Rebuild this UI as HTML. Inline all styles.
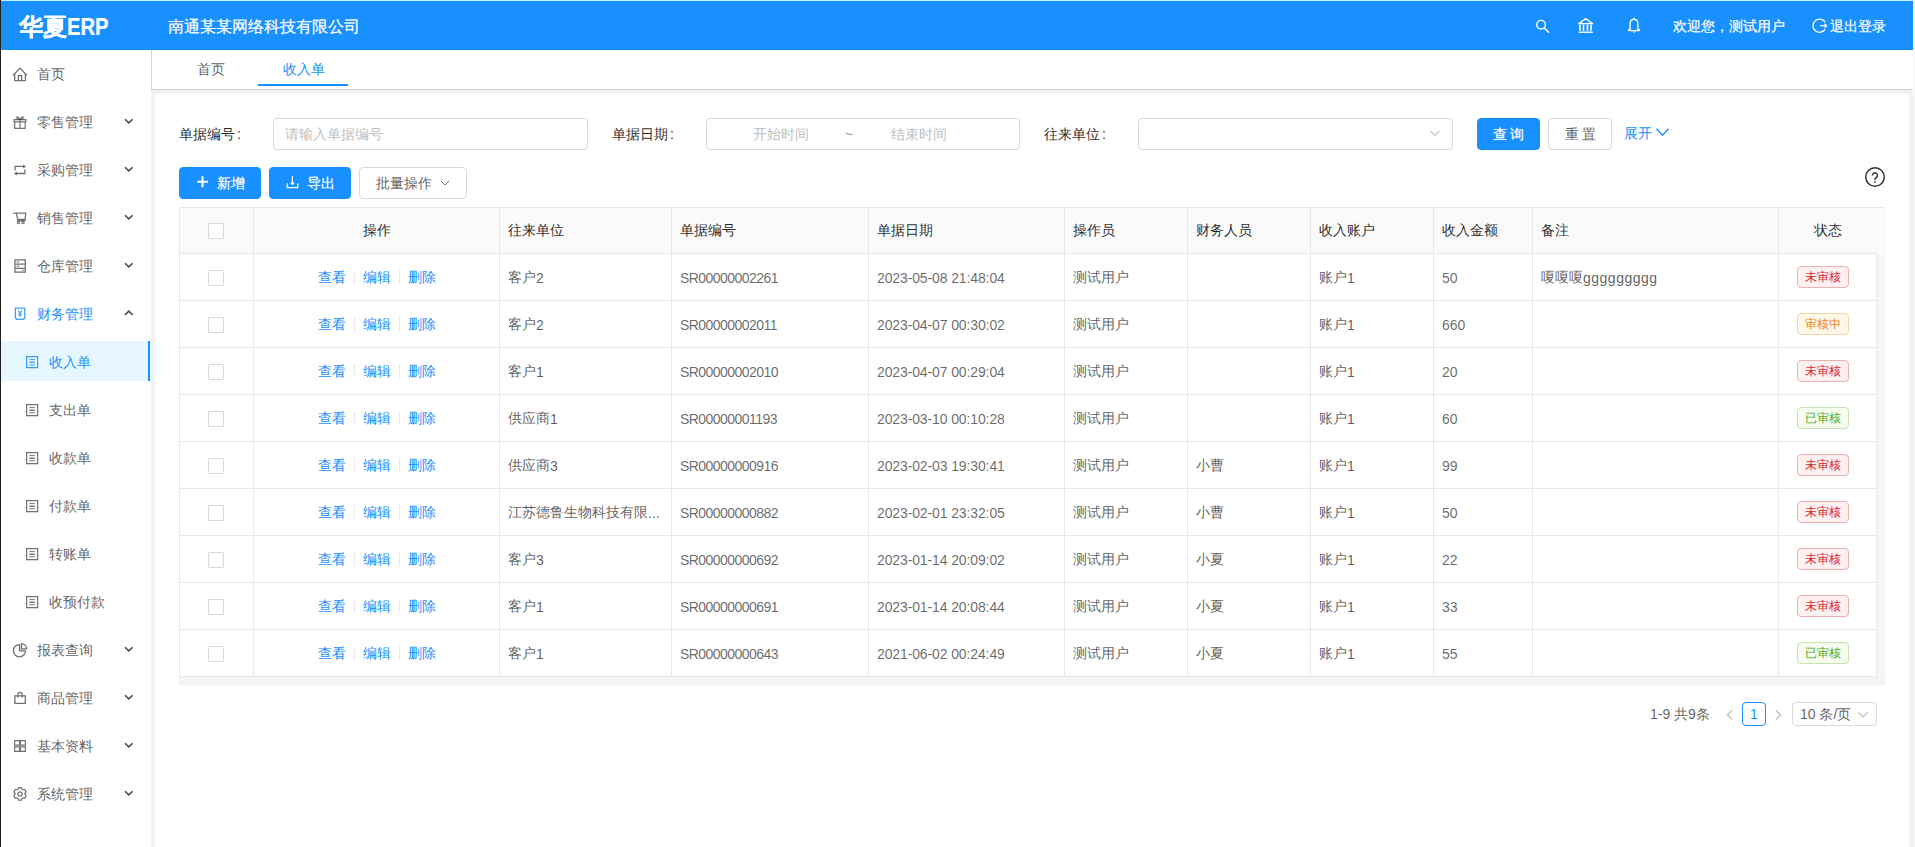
<!DOCTYPE html>
<html><head><meta charset="utf-8">
<style>
*{box-sizing:border-box}
html,body{margin:0;padding:0}
body{width:1915px;height:847px;overflow:hidden;position:relative;background:#fff;font-family:"Liberation Sans",sans-serif;font-size:14px;color:rgba(0,0,0,.65)}
.abs{position:absolute}
#edgeL{left:0;top:0;width:1px;height:847px;background:#1e1e1e}
#edgeT{left:0;top:0;width:1915px;height:1px;background:#bdf3ff}
#edgeR{left:1913px;top:0;width:2px;height:847px;background:linear-gradient(#eefcff 0,#eefcff 50px,#f7f7f7 50px)}
#header{left:1px;top:1px;width:1912px;height:49px;background:#1890ff;color:#fff;-webkit-text-stroke:0.2px #fff}
#logo{left:18px;top:11px;font-size:22px;font-weight:bold;line-height:30px;white-space:nowrap}
#company{left:167px;top:15px;font-size:16px;line-height:22px}
#sider{left:1px;top:50px;width:150px;height:797px;background:#fff}
#tabbar{left:151px;top:50px;width:1761px;height:40px;background:#fff;border-left:1px solid #d4d4d4;border-bottom:1px solid #cdcdcd}
#contentbg{left:151px;top:90px;width:1764px;height:757px;background:#f2f2f2}
#card{left:155px;top:94px;width:1754px;height:753px;background:#fff}
.menu-item{position:absolute;left:0;width:150px;height:40px;line-height:40px;color:rgba(0,0,0,.65);font-size:14px}
.menu-item .ic{position:absolute;top:13px;left:11px;width:16px;height:16px;opacity:.85}
.menu-item .tx{position:absolute;left:36px;top:1px}
.menu-item .arr{position:absolute;left:122px;top:16px;width:12px;height:9px}
.menu-item.sub .ic{left:23px}
.menu-item.sub .tx{left:48px}
.menu-item.sel{background:#e6f7ff;color:#1890ff}
.menu-item.sel .ic{color:#1890ff}
.menu-item.sel:after{content:"";position:absolute;right:1px;top:0;width:2px;height:40px;background:#1890ff}

.tab{position:absolute;top:-1px;height:40px;line-height:40px;font-size:14px;color:rgba(0,0,0,.65)}
#inkbar{left:106px;top:34px;width:90px;height:2px;background:#1890ff}
.lbl{position:absolute;font-size:14px;color:rgba(0,0,0,.85);line-height:22px}
.inp{position:absolute;height:32px;border:1px solid #d9d9d9;border-radius:4px;background:#fff;line-height:30px;font-size:14px;color:#bfbfbf}
.btn{position:absolute;height:32px;border-radius:4px;font-size:14px;line-height:30px;text-align:center;border:1px solid #d9d9d9;background:#fff;color:rgba(0,0,0,.65)}
.btn.primary{background:#1890ff;border-color:#1890ff;color:#fff;-webkit-text-stroke:0.2px #fff}

.hl{position:absolute;height:1px;background:#e8e8e8}
.vl{position:absolute;width:1px;background:#e8e8e8}
.th{position:absolute;line-height:21px;color:rgba(0,0,0,.85);font-size:14px;white-space:nowrap}
.td{position:absolute;line-height:22px;color:rgba(0,0,0,.65);font-size:14px;white-space:nowrap}
.cb{position:absolute;width:16px;height:16px;border:1px solid #d9d9d9;border-radius:1px;background:#fff}
.lk{color:#1890ff}
.dv{display:inline-block;width:1px;height:14px;background:#e8e8e8;margin:0 8px;vertical-align:-2px}
.tag{position:absolute;height:22px;line-height:20px;font-size:12px;padding:0 7px;border-radius:4px;border:1px solid}
.t-red{color:#d91f35;background:#fdf0f0;border-color:#eeb0b0}
.t-or{color:#e3861f;background:#fff7e8;border-color:#f0d5a8}
.t-gr{color:#4fa82a;background:#f6fdef;border-color:#c4e3ae}
</style></head>
<body>
<div id="edgeT" class="abs"></div>
<div id="header" class="abs">
  <div id="logo" class="abs"><span style="font-size:24px;font-weight:900">华夏</span><span style="display:inline-block;font-size:23px;transform:scaleX(.88);transform-origin:0 50%;margin-left:0">ERP</span></div>
  <div id="company" class="abs">南通某某网络科技有限公司</div>
  <svg class="abs" style="left:1534px;top:17px" width="16" height="17" viewBox="0 0 16 17"><circle cx="6.1" cy="6.7" r="4.3" fill="none" stroke="#fff" stroke-width="1.4"/><path d="M9.3 10 13.6 14.3" stroke="#fff" stroke-width="1.5" stroke-linecap="round"/></svg>
  <svg class="abs" style="left:1576px;top:16px" width="17" height="17" viewBox="0 0 17 17"><path d="M8.7 1.6 15.6 6.6H1.8z" fill="none" stroke="#fff" stroke-width="1.3" stroke-linejoin="round"/><path d="M1.6 15.2h14.2" stroke="#fff" stroke-width="1.4"/><path d="M3 7.4v6.4M6.5 7.4v6.4M10.5 7.4v6.4M14 7.4v6.4" stroke="#fff" stroke-width="1.6"/></svg>
  <svg class="abs" style="left:1625px;top:15px" width="16" height="18" viewBox="0 0 16 18"><path d="M8 3.4c-2.5 0-3.9 2-3.9 4.4v5.6H2.6v1.2h10.8v-1.2h-1.5V7.8C11.9 5.4 10.5 3.4 8 3.4z" fill="none" stroke="#fff" stroke-width="1.3" stroke-linejoin="round"/><path d="M8 1.8v1.6" stroke="#fff" stroke-width="1.4"/><path d="M6.6 15.6a1.4 1.1 0 0 0 2.8 0z" fill="#fff"/></svg>
  <div class="abs" style="left:1672px;top:14px;font-size:14px;line-height:22px">欢迎您，测试用户</div>
  <svg class="abs" style="left:1811px;top:16px" width="17" height="17" viewBox="0 0 17 17"><path d="M13.2 5.2A6.6 6.6 0 1 0 13.2 12.2" fill="none" stroke="#fff" stroke-width="1.3"/><path d="M8 8.7h6.6M12.6 6.8l2 1.9-2 1.9" fill="none" stroke="#fff" stroke-width="1.3"/></svg>
  <div class="abs" style="left:1829px;top:14px;font-size:14px;line-height:22px">退出登录</div>
</div>
<div id="edgeL" class="abs"></div>
<div id="sider" class="abs">
<div class="menu-item" style="top:3px"><svg class="ic" viewBox="0 0 16 16"><path d="M1.1 9.2 8 2.1l6.9 7.1M2.7 7.6v7h10.7v-7M6.4 14.6V9.6h3.2v5" stroke="currentColor" fill="none" stroke-width="1.3" stroke-linejoin="round"/></svg><span class="tx">首页</span></div>
<div class="menu-item" style="top:51px"><svg class="ic" viewBox="0 0 16 16"><path d="M2.1 5.6h11.7v2.2H2.1zM2.7 7.8v6.6h10.5V7.8M8 5.6v8.8" stroke="currentColor" fill="none" stroke-width="1.2"/><path d="M8 5.4C7 3.6 5.2 2.2 4.7 3.4 4.3 4.4 6 5.2 8 5.4zM8 5.4c1-1.8 2.8-3.2 3.3-2 .4 1-1.3 1.8-3.3 2z" stroke="currentColor" fill="none" stroke-width="1.2"/></svg><span class="tx">零售管理</span><svg class="arr" viewBox="0 0 12 9"><path d="M2 2.2 5.8 5.9 9.6 2.2" fill="none" stroke="rgba(0,0,0,.7)" stroke-width="1.6"/></svg></div>
<div class="menu-item" style="top:99px"><svg class="ic" viewBox="0 0 16 16"><path d="M3.1 8.5V4.4h8.4M12.9 7.5v4H4.6" stroke="currentColor" fill="none" stroke-width="1.3"/><path d="M11.1 2.4l3 2-3 2zM4.9 9.5l-3 2 3 2z" fill="currentColor"/></svg><span class="tx">采购管理</span><svg class="arr" viewBox="0 0 12 9"><path d="M2 2.2 5.8 5.9 9.6 2.2" fill="none" stroke="rgba(0,0,0,.7)" stroke-width="1.6"/></svg></div>
<div class="menu-item" style="top:147px"><svg class="ic" viewBox="0 0 16 16"><path d="M1.2 3.2h3.2l1.4 7.4h8M4.7 3.2h9.1L13 9.3H5.6" stroke="currentColor" fill="none" stroke-width="1.2" stroke-linejoin="round"/><circle cx="6.4" cy="12.6" r="1.2" stroke="currentColor" fill="none" stroke-width="1.1"/><circle cx="11" cy="12.6" r="1.2" stroke="currentColor" fill="none" stroke-width="1.1"/></svg><span class="tx">销售管理</span><svg class="arr" viewBox="0 0 12 9"><path d="M2 2.2 5.8 5.9 9.6 2.2" fill="none" stroke="rgba(0,0,0,.7)" stroke-width="1.6"/></svg></div>
<div class="menu-item" style="top:195px"><svg class="ic" viewBox="0 0 16 16"><path d="M2.9 1.8h10.4v12.3H2.9zM2.9 10.4h10.4M2.9 6.2h10.4" stroke="currentColor" fill="none" stroke-width="1.3"/><path d="M4.6 3.3h2.6v1.4H4.6zM4.6 7.6h2.6v1.4H4.6z" fill="currentColor" opacity=".7"/><circle cx="10.9" cy="12.3" r=".8" fill="currentColor"/></svg><span class="tx">仓库管理</span><svg class="arr" viewBox="0 0 12 9"><path d="M2 2.2 5.8 5.9 9.6 2.2" fill="none" stroke="rgba(0,0,0,.7)" stroke-width="1.6"/></svg></div>
<div class="menu-item" style="top:243px;color:#1890ff"><svg class="ic" viewBox="0 0 16 16"><path d="M3.4 2.2h9.4v9.6l-1.4 1.5H4.8l-1.4-1.5z" stroke="currentColor" fill="none" stroke-width="1.3" stroke-linejoin="round"/><path d="M6.2 4.6 8 6.8l1.8-2.2M8 6.8v3.6M6.4 7.8h3.2M6.4 9.2h3.2" stroke="currentColor" fill="none" stroke-width="1.1"/></svg><span class="tx">财务管理</span><svg class="arr" viewBox="0 0 12 9"><path d="M2 5.9 5.8 2.2 9.6 5.9" fill="none" stroke="rgba(0,0,0,.7)" stroke-width="1.6"/></svg></div>
<div class="menu-item sub sel" style="top:291px"><svg class="ic" viewBox="0 0 16 16"><path d="M2.6 2.6h11v11h-11z" stroke="currentColor" fill="none" stroke-width="1.2"/><path d="M5.4 5.6h5.4M5.4 8.2h5.4M5.4 10.8h5.4" stroke="currentColor" fill="none" stroke-width="1"/><path d="M5.4 7.6h5.4v1.4H5.4z" fill="currentColor" opacity=".5"/></svg><span class="tx">收入单</span></div>
<div class="menu-item sub" style="top:339px"><svg class="ic" viewBox="0 0 16 16"><path d="M2.6 2.6h11v11h-11z" stroke="currentColor" fill="none" stroke-width="1.2"/><path d="M5.4 5.6h5.4M5.4 8.2h5.4M5.4 10.8h5.4" stroke="currentColor" fill="none" stroke-width="1"/><path d="M5.4 7.6h5.4v1.4H5.4z" fill="currentColor" opacity=".5"/></svg><span class="tx">支出单</span></div>
<div class="menu-item sub" style="top:387px"><svg class="ic" viewBox="0 0 16 16"><path d="M2.6 2.6h11v11h-11z" stroke="currentColor" fill="none" stroke-width="1.2"/><path d="M5.4 5.6h5.4M5.4 8.2h5.4M5.4 10.8h5.4" stroke="currentColor" fill="none" stroke-width="1"/><path d="M5.4 7.6h5.4v1.4H5.4z" fill="currentColor" opacity=".5"/></svg><span class="tx">收款单</span></div>
<div class="menu-item sub" style="top:435px"><svg class="ic" viewBox="0 0 16 16"><path d="M2.6 2.6h11v11h-11z" stroke="currentColor" fill="none" stroke-width="1.2"/><path d="M5.4 5.6h5.4M5.4 8.2h5.4M5.4 10.8h5.4" stroke="currentColor" fill="none" stroke-width="1"/><path d="M5.4 7.6h5.4v1.4H5.4z" fill="currentColor" opacity=".5"/></svg><span class="tx">付款单</span></div>
<div class="menu-item sub" style="top:483px"><svg class="ic" viewBox="0 0 16 16"><path d="M2.6 2.6h11v11h-11z" stroke="currentColor" fill="none" stroke-width="1.2"/><path d="M5.4 5.6h5.4M5.4 8.2h5.4M5.4 10.8h5.4" stroke="currentColor" fill="none" stroke-width="1"/><path d="M5.4 7.6h5.4v1.4H5.4z" fill="currentColor" opacity=".5"/></svg><span class="tx">转账单</span></div>
<div class="menu-item sub" style="top:531px"><svg class="ic" viewBox="0 0 16 16"><path d="M2.6 2.6h11v11h-11z" stroke="currentColor" fill="none" stroke-width="1.2"/><path d="M5.4 5.6h5.4M5.4 8.2h5.4M5.4 10.8h5.4" stroke="currentColor" fill="none" stroke-width="1"/><path d="M5.4 7.6h5.4v1.4H5.4z" fill="currentColor" opacity=".5"/></svg><span class="tx">收预付款</span></div>
<div class="menu-item" style="top:579px"><svg class="ic" viewBox="0 0 16 16"><path d="M7.6 2.6A6.1 6.1 0 1 0 13.6 8.8H7.6z" stroke="currentColor" fill="none" stroke-width="1.3" stroke-linejoin="round"/><path d="M9.5 1.6v5.2h5.2A5.2 5.2 0 0 0 9.5 1.6z" stroke="currentColor" fill="none" stroke-width="1.3" stroke-linejoin="round"/></svg><span class="tx">报表查询</span><svg class="arr" viewBox="0 0 12 9"><path d="M2 2.2 5.8 5.9 9.6 2.2" fill="none" stroke="rgba(0,0,0,.7)" stroke-width="1.6"/></svg></div>
<div class="menu-item" style="top:627px"><svg class="ic" viewBox="0 0 16 16"><path d="M2.9 5.8h10.4v7.5H2.9zM5.9 7.6V4.6a2.2 2.2 0 0 1 4.4 0v3" stroke="currentColor" fill="none" stroke-width="1.3"/></svg><span class="tx">商品管理</span><svg class="arr" viewBox="0 0 12 9"><path d="M2 2.2 5.8 5.9 9.6 2.2" fill="none" stroke="rgba(0,0,0,.7)" stroke-width="1.6"/></svg></div>
<div class="menu-item" style="top:675px"><svg class="ic" viewBox="0 0 16 16"><path d="M2.6 2.6h5v4.5h-5zM8.4 2.6h5v4.5h-5zM2.6 8.9h5v4.5h-5zM8.4 8.9h5v4.5h-5z" stroke="currentColor" fill="none" stroke-width="1.2"/></svg><span class="tx">基本资料</span><svg class="arr" viewBox="0 0 12 9"><path d="M2 2.2 5.8 5.9 9.6 2.2" fill="none" stroke="rgba(0,0,0,.7)" stroke-width="1.6"/></svg></div>
<div class="menu-item" style="top:723px"><svg class="ic" viewBox="0 0 16 16"><path d="M10.40 3.74 L9.33 1.64 L6.67 1.64 L5.60 3.74 L3.24 3.62 L1.91 5.92 L3.20 7.90 L1.91 9.88 L3.24 12.18 L5.60 12.06 L6.67 14.16 L9.33 14.16 L10.40 12.06 L12.76 12.18 L14.09 9.88 L12.80 7.90 L14.09 5.92 L12.76 3.62z" stroke="currentColor" fill="none" stroke-width="1.2" stroke-linejoin="round"/><circle cx="8.0" cy="7.9" r="2.1" stroke="currentColor" fill="none" stroke-width="1.2"/></svg><span class="tx">系统管理</span><svg class="arr" viewBox="0 0 12 9"><path d="M2 2.2 5.8 5.9 9.6 2.2" fill="none" stroke="rgba(0,0,0,.7)" stroke-width="1.6"/></svg></div>
</div>
<div id="tabbar" class="abs">
<div class="tab" style="left:45px">首页</div>
<div class="tab" style="left:131px;color:#1890ff">收入单</div>
<div id="inkbar" class="abs"></div>
</div>
<div id="contentbg" class="abs"></div>
<div id="card" class="abs">
<div class="lbl" style="left:24px;top:29px">单据编号<span style="margin-left:2px">:</span></div>
<div class="inp" style="left:118px;top:24px;width:315px;padding-left:11px">请输入单据编号</div>
<div class="lbl" style="left:457px;top:29px">单据日期<span style="margin-left:2px">:</span></div>
<div class="inp" style="left:551px;top:24px;width:314px"><span class="abs" style="left:46px;top:0">开始时间</span><span class="abs" style="left:138px;top:0;color:rgba(0,0,0,.45)">~</span><span class="abs" style="left:184px;top:0">结束时间</span></div>
<div class="lbl" style="left:889px;top:29px">往来单位<span style="margin-left:2px">:</span></div>
<div class="inp" style="left:983px;top:24px;width:315px"><svg class="abs" style="left:290px;top:8px" width="12" height="12" viewBox="0 0 12 12"><path d="M1.5 4 6 8.5 10.5 4" fill="none" stroke="#c4c4c4" stroke-width="1.1"/></svg></div>
<div class="btn primary" style="left:1322px;top:24px;width:63px;letter-spacing:3px;padding-left:3px">查询</div>
<div class="btn" style="left:1393px;top:24px;width:64px;letter-spacing:3px;padding-left:3px">重置</div>
<div class="abs" style="left:1469px;top:28px;line-height:22px;color:#1890ff">展开</div><svg class="abs" style="left:1500px;top:33px" width="15" height="11" viewBox="0 0 15 11"><path d="M1.5 1.8 7.5 8.2 13.5 1.8" fill="none" stroke="#1890ff" stroke-width="1.4"/></svg>
<div class="btn primary" style="left:24px;top:73px;width:82px"><svg class="abs" style="left:17px;top:8px" width="12" height="12" viewBox="0 0 12 12"><path d="M5.5 0.3v11M0.3 5.8h10.6" stroke="#fff" stroke-width="2"/></svg><span class="abs" style="left:37px;top:0">新增</span></div>
<div class="btn primary" style="left:114px;top:73px;width:82px"><svg class="abs" style="left:16px;top:8px" width="13" height="13" viewBox="0 0 13 13"><path d="M6.4 0.3v8.4M4.6 6.6 6.4 8.4 8.2 6.6M1.2 7.2v4.4h10.6V7.2" fill="none" stroke="#fff" stroke-width="1.2"/></svg><span class="abs" style="left:37px;top:0">导出</span></div>
<div class="btn" style="left:204px;top:73px;width:108px"><span class="abs" style="left:16px;top:0">批量操作</span><svg class="abs" style="left:80px;top:10px" width="10" height="10" viewBox="0 0 10 10"><path d="M1 3 5 7 9 3" fill="none" stroke="rgba(0,0,0,.55)" stroke-width="1"/></svg></div>
<svg class="abs" style="left:1709px;top:72px" width="22" height="22" viewBox="0 0 22 22"><circle cx="11" cy="11" r="9.3" fill="none" stroke="#333" stroke-width="1.5"/><path d="M8.5 9.4a2.5 2.5 0 1 1 3.8 2.1c-.8.5-1.3.9-1.3 1.8v.7" fill="none" stroke="#333" stroke-width="1.5"/><rect x="10.2" y="15.2" width="1.6" height="1.6" fill="#333"/></svg>
<!--T0-->
<div class="abs" style="left:24px;top:113px;width:1706px;height:46px;background:#fafafa"></div>
<div class="hl" style="left:24px;top:113px;width:1706px"></div>
<div class="hl" style="left:24px;top:159px;width:1698px"></div>
<div class="hl" style="left:24px;top:206px;width:1698px"></div>
<div class="hl" style="left:24px;top:253px;width:1698px"></div>
<div class="hl" style="left:24px;top:300px;width:1698px"></div>
<div class="hl" style="left:24px;top:347px;width:1698px"></div>
<div class="hl" style="left:24px;top:394px;width:1698px"></div>
<div class="hl" style="left:24px;top:441px;width:1698px"></div>
<div class="hl" style="left:24px;top:488px;width:1698px"></div>
<div class="hl" style="left:24px;top:535px;width:1698px"></div>
<div class="hl" style="left:24px;top:582px;width:1698px"></div>
<div class="vl" style="left:24px;top:113px;height:470px"></div>
<div class="vl" style="left:98px;top:113px;height:470px"></div>
<div class="vl" style="left:344px;top:113px;height:470px"></div>
<div class="vl" style="left:516px;top:113px;height:470px"></div>
<div class="vl" style="left:713px;top:113px;height:470px"></div>
<div class="vl" style="left:909px;top:113px;height:470px"></div>
<div class="vl" style="left:1032px;top:113px;height:470px"></div>
<div class="vl" style="left:1155px;top:113px;height:470px"></div>
<div class="vl" style="left:1278px;top:113px;height:470px"></div>
<div class="vl" style="left:1377px;top:113px;height:470px"></div>
<div class="vl" style="left:1623px;top:113px;height:470px"></div>
<div class="vl" style="left:1721px;top:159px;height:424px"></div>
<div class="abs" style="left:1722px;top:160px;width:8px;height:423px;background:#f6f6f6"></div>
<div class="abs" style="left:24px;top:583px;width:1706px;height:8px;background:#f4f4f4"></div>
<div class="cb" style="left:53px;top:129px"></div>
<div class="th" style="left:99px;width:245px;text-align:center;top:126px">操作</div>
<div class="th" style="left:353px;top:126px">往来单位</div>
<div class="th" style="left:525px;top:126px">单据编号</div>
<div class="th" style="left:722px;top:126px">单据日期</div>
<div class="th" style="left:918px;top:126px">操作员</div>
<div class="th" style="left:1041px;top:126px">财务人员</div>
<div class="th" style="left:1164px;top:126px">收入账户</div>
<div class="th" style="left:1287px;top:126px">收入金额</div>
<div class="th" style="left:1386px;top:126px">备注</div>
<div class="th" style="left:1624px;width:97px;text-align:center;top:126px">状态</div>
<div class="cb" style="left:53px;top:176px"></div>
<div class="td" style="left:99px;width:245px;text-align:center;top:172px"><span class="lk">查看</span><span class="dv"></span><span class="lk">编辑</span><span class="dv"></span><span class="lk">删除</span></div>
<div class="td" style="left:353px;top:172px;">客户<span style="position:relative;top:1px">2</span></div>
<div class="td" style="left:525px;top:173px;letter-spacing:-0.55px;color:rgba(0,0,0,.6);">SR00000002261</div>
<div class="td" style="left:722px;top:173px;letter-spacing:-0.12px;color:rgba(0,0,0,.6);">2023-05-08 21:48:04</div>
<div class="td" style="left:918px;top:172px;">测试用户</div>
<div class="td" style="left:1164px;top:172px;">账户<span style="position:relative;top:1px">1</span></div>
<div class="td" style="left:1287px;top:173px;color:rgba(0,0,0,.6);">50</div>
<div class="td" style="left:1386px;top:172px;">嗄嗄嗄<span style="position:relative;top:1px;letter-spacing:0.5px">ggggggggg</span></div>
<div class="tag t-red" style="left:1642px;top:172px">未审核</div>
<div class="cb" style="left:53px;top:223px"></div>
<div class="td" style="left:99px;width:245px;text-align:center;top:219px"><span class="lk">查看</span><span class="dv"></span><span class="lk">编辑</span><span class="dv"></span><span class="lk">删除</span></div>
<div class="td" style="left:353px;top:219px;">客户<span style="position:relative;top:1px">2</span></div>
<div class="td" style="left:525px;top:220px;letter-spacing:-0.55px;color:rgba(0,0,0,.6);">SR00000002011</div>
<div class="td" style="left:722px;top:220px;letter-spacing:-0.12px;color:rgba(0,0,0,.6);">2023-04-07 00:30:02</div>
<div class="td" style="left:918px;top:219px;">测试用户</div>
<div class="td" style="left:1164px;top:219px;">账户<span style="position:relative;top:1px">1</span></div>
<div class="td" style="left:1287px;top:220px;color:rgba(0,0,0,.6);">660</div>
<div class="tag t-or" style="left:1642px;top:219px">审核中</div>
<div class="cb" style="left:53px;top:270px"></div>
<div class="td" style="left:99px;width:245px;text-align:center;top:266px"><span class="lk">查看</span><span class="dv"></span><span class="lk">编辑</span><span class="dv"></span><span class="lk">删除</span></div>
<div class="td" style="left:353px;top:266px;">客户<span style="position:relative;top:1px">1</span></div>
<div class="td" style="left:525px;top:267px;letter-spacing:-0.55px;color:rgba(0,0,0,.6);">SR00000002010</div>
<div class="td" style="left:722px;top:267px;letter-spacing:-0.12px;color:rgba(0,0,0,.6);">2023-04-07 00:29:04</div>
<div class="td" style="left:918px;top:266px;">测试用户</div>
<div class="td" style="left:1164px;top:266px;">账户<span style="position:relative;top:1px">1</span></div>
<div class="td" style="left:1287px;top:267px;color:rgba(0,0,0,.6);">20</div>
<div class="tag t-red" style="left:1642px;top:266px">未审核</div>
<div class="cb" style="left:53px;top:317px"></div>
<div class="td" style="left:99px;width:245px;text-align:center;top:313px"><span class="lk">查看</span><span class="dv"></span><span class="lk">编辑</span><span class="dv"></span><span class="lk">删除</span></div>
<div class="td" style="left:353px;top:313px;">供应商<span style="position:relative;top:1px">1</span></div>
<div class="td" style="left:525px;top:314px;letter-spacing:-0.55px;color:rgba(0,0,0,.6);">SR00000001193</div>
<div class="td" style="left:722px;top:314px;letter-spacing:-0.12px;color:rgba(0,0,0,.6);">2023-03-10 00:10:28</div>
<div class="td" style="left:918px;top:313px;">测试用户</div>
<div class="td" style="left:1164px;top:313px;">账户<span style="position:relative;top:1px">1</span></div>
<div class="td" style="left:1287px;top:314px;color:rgba(0,0,0,.6);">60</div>
<div class="tag t-gr" style="left:1642px;top:313px">已审核</div>
<div class="cb" style="left:53px;top:364px"></div>
<div class="td" style="left:99px;width:245px;text-align:center;top:360px"><span class="lk">查看</span><span class="dv"></span><span class="lk">编辑</span><span class="dv"></span><span class="lk">删除</span></div>
<div class="td" style="left:353px;top:360px;">供应商<span style="position:relative;top:1px">3</span></div>
<div class="td" style="left:525px;top:361px;letter-spacing:-0.55px;color:rgba(0,0,0,.6);">SR00000000916</div>
<div class="td" style="left:722px;top:361px;letter-spacing:-0.12px;color:rgba(0,0,0,.6);">2023-02-03 19:30:41</div>
<div class="td" style="left:918px;top:360px;">测试用户</div>
<div class="td" style="left:1041px;top:360px;">小曹</div>
<div class="td" style="left:1164px;top:360px;">账户<span style="position:relative;top:1px">1</span></div>
<div class="td" style="left:1287px;top:361px;color:rgba(0,0,0,.6);">99</div>
<div class="tag t-red" style="left:1642px;top:360px">未审核</div>
<div class="cb" style="left:53px;top:411px"></div>
<div class="td" style="left:99px;width:245px;text-align:center;top:407px"><span class="lk">查看</span><span class="dv"></span><span class="lk">编辑</span><span class="dv"></span><span class="lk">删除</span></div>
<div class="td" style="left:353px;top:407px;">江苏德鲁生物科技有限<span style="position:relative;top:1px">...</span></div>
<div class="td" style="left:525px;top:408px;letter-spacing:-0.55px;color:rgba(0,0,0,.6);">SR00000000882</div>
<div class="td" style="left:722px;top:408px;letter-spacing:-0.12px;color:rgba(0,0,0,.6);">2023-02-01 23:32:05</div>
<div class="td" style="left:918px;top:407px;">测试用户</div>
<div class="td" style="left:1041px;top:407px;">小曹</div>
<div class="td" style="left:1164px;top:407px;">账户<span style="position:relative;top:1px">1</span></div>
<div class="td" style="left:1287px;top:408px;color:rgba(0,0,0,.6);">50</div>
<div class="tag t-red" style="left:1642px;top:407px">未审核</div>
<div class="cb" style="left:53px;top:458px"></div>
<div class="td" style="left:99px;width:245px;text-align:center;top:454px"><span class="lk">查看</span><span class="dv"></span><span class="lk">编辑</span><span class="dv"></span><span class="lk">删除</span></div>
<div class="td" style="left:353px;top:454px;">客户<span style="position:relative;top:1px">3</span></div>
<div class="td" style="left:525px;top:455px;letter-spacing:-0.55px;color:rgba(0,0,0,.6);">SR00000000692</div>
<div class="td" style="left:722px;top:455px;letter-spacing:-0.12px;color:rgba(0,0,0,.6);">2023-01-14 20:09:02</div>
<div class="td" style="left:918px;top:454px;">测试用户</div>
<div class="td" style="left:1041px;top:454px;">小夏</div>
<div class="td" style="left:1164px;top:454px;">账户<span style="position:relative;top:1px">1</span></div>
<div class="td" style="left:1287px;top:455px;color:rgba(0,0,0,.6);">22</div>
<div class="tag t-red" style="left:1642px;top:454px">未审核</div>
<div class="cb" style="left:53px;top:505px"></div>
<div class="td" style="left:99px;width:245px;text-align:center;top:501px"><span class="lk">查看</span><span class="dv"></span><span class="lk">编辑</span><span class="dv"></span><span class="lk">删除</span></div>
<div class="td" style="left:353px;top:501px;">客户<span style="position:relative;top:1px">1</span></div>
<div class="td" style="left:525px;top:502px;letter-spacing:-0.55px;color:rgba(0,0,0,.6);">SR00000000691</div>
<div class="td" style="left:722px;top:502px;letter-spacing:-0.12px;color:rgba(0,0,0,.6);">2023-01-14 20:08:44</div>
<div class="td" style="left:918px;top:501px;">测试用户</div>
<div class="td" style="left:1041px;top:501px;">小夏</div>
<div class="td" style="left:1164px;top:501px;">账户<span style="position:relative;top:1px">1</span></div>
<div class="td" style="left:1287px;top:502px;color:rgba(0,0,0,.6);">33</div>
<div class="tag t-red" style="left:1642px;top:501px">未审核</div>
<div class="cb" style="left:53px;top:552px"></div>
<div class="td" style="left:99px;width:245px;text-align:center;top:548px"><span class="lk">查看</span><span class="dv"></span><span class="lk">编辑</span><span class="dv"></span><span class="lk">删除</span></div>
<div class="td" style="left:353px;top:548px;">客户<span style="position:relative;top:1px">1</span></div>
<div class="td" style="left:525px;top:549px;letter-spacing:-0.55px;color:rgba(0,0,0,.6);">SR00000000643</div>
<div class="td" style="left:722px;top:549px;letter-spacing:-0.12px;color:rgba(0,0,0,.6);">2021-06-02 00:24:49</div>
<div class="td" style="left:918px;top:548px;">测试用户</div>
<div class="td" style="left:1041px;top:548px;">小夏</div>
<div class="td" style="left:1164px;top:548px;">账户<span style="position:relative;top:1px">1</span></div>
<div class="td" style="left:1287px;top:549px;color:rgba(0,0,0,.6);">55</div>
<div class="tag t-gr" style="left:1642px;top:548px">已审核</div>
<div class="abs" style="left:1495px;top:609px;line-height:22px;color:rgba(0,0,0,.65)">1-9 共9条</div>
<svg class="abs" style="left:1570px;top:615px" width="10" height="12" viewBox="0 0 10 12"><path d="M7 1.5 2.5 6 7 10.5" fill="none" stroke="rgba(0,0,0,.25)" stroke-width="1.3"/></svg>
<div class="abs" style="left:1587px;top:608px;width:24px;height:24px;border:1px solid #1890ff;border-radius:4px;text-align:center;line-height:22px;color:#1890ff">1</div>
<svg class="abs" style="left:1618px;top:615px" width="10" height="12" viewBox="0 0 10 12"><path d="M3 1.5 7.5 6 3 10.5" fill="none" stroke="rgba(0,0,0,.25)" stroke-width="1.3"/></svg>
<div class="abs" style="left:1637px;top:608px;width:85px;height:24px;border:1px solid #d9d9d9;border-radius:4px;line-height:22px;color:rgba(0,0,0,.65);padding-left:7px">10 条/页<svg class="abs" style="left:64px;top:7px" width="12" height="10" viewBox="0 0 12 10"><path d="M1.5 2.5 6 7 10.5 2.5" fill="none" stroke="rgba(0,0,0,.25)" stroke-width="1.2"/></svg></div>
<!--T1-->

</div>
<div id="edgeR" class="abs"></div>
</body></html>
